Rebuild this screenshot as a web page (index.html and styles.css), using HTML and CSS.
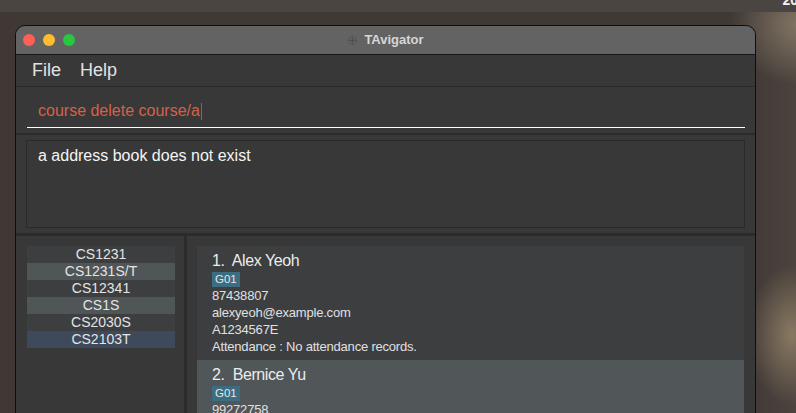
FILE: index.html
```html
<!DOCTYPE html>
<html>
<head>
<meta charset="utf-8">
<link rel="stylesheet" href="styles.css">
</head>
<body>
<div class="strip"><span class="clock">20</span></div>
<div class="window">
  <div class="titlebar">
    <div class="lights">
      <span class="light red"></span>
      <span class="light yellow"></span>
      <span class="light green"></span>
    </div>
    <div class="title">
      <svg class="appicon" width="11" height="11" viewBox="0 0 11 11">
        <circle cx="5.5" cy="5.5" r="3.8" fill="none" stroke="#555" stroke-width="1"/>
        <path d="M5.5 0.5V10.5M0.5 5.5H10.5" stroke="#555" stroke-width="1"/>
        <circle cx="5.5" cy="5.5" r="1.3" fill="#4a4a4a"/>
      </svg>
      <span>TAvigator</span>
    </div>
    <div></div>
  </div>
  <div class="menu">
    <span>File</span>
    <span>Help</span>
  </div>
  <div class="command">
    <div class="field">course delete course/a<span class="caret"></span></div>
  </div>
  <div class="result">
    <div class="resultbox">a address book does not exist</div>
  </div>
  <div class="bottom">
    <div class="leftpane">
      <div class="courses">
        <div class="course">CS1231</div>
        <div class="course alt">CS1231S/T</div>
        <div class="course">CS12341</div>
        <div class="course alt">CS1S</div>
        <div class="course">CS2030S</div>
        <div class="course selected">CS2103T</div>
      </div>
    </div>
    <div class="divider"></div>
    <div class="rightpane">
      <div class="card">
        <div class="name">1.&nbsp; Alex Yeoh</div>
        <div class="tags"><span class="tag">G01</span></div>
        <div class="line">87438807</div>
        <div class="line">alexyeoh@example.com</div>
        <div class="line">A1234567E</div>
        <div class="line">Attendance : No attendance records.</div>
      </div>
      <div class="card alt">
        <div class="name">2.&nbsp; Bernice Yu</div>
        <div class="tags"><span class="tag">G01</span></div>
        <div class="line">99272758</div>
        <div class="line">berniceyu@example.com</div>
        <div class="line">A2345678F</div>
        <div class="line">Attendance : No attendance records.</div>
      </div>
    </div>
  </div>
</div>
</body>
</html>
```
FILE: styles.css
```css
* { box-sizing: border-box; margin: 0; padding: 0; }
html, body { width: 796px; height: 413px; overflow: hidden; }
body {
  font-family: "Liberation Sans", Arial, sans-serif;
  background:
    radial-gradient(ellipse 45px 70px at 792px 335px, rgba(140,124,100,0.95), rgba(140,124,100,0)),
    radial-gradient(ellipse 70px 60px at 800px 25px, rgba(135,122,104,0.9), rgba(135,122,104,0)),
    linear-gradient(90deg, #3f3835 0%, #3f3835 93%, #4b433d 100%);
}
.strip {
  height: 12px;
  background: #4b4542;
  display: flex;
  justify-content: flex-end;
  overflow: hidden;
}
.clock {
  color: #f2f2f2;
  font-weight: bold;
  font-size: 14px;
  line-height: 14px;
  margin-top: -7px;
  margin-right: -2px;
}
.window {
  margin: 13px 0 0 15px;
  width: 741px;
  height: 420px;
  border: 1px solid #0e0e0e;
  border-radius: 10px 10px 0 0;
  overflow: hidden;
  background: #383838;
  display: flex;
  flex-direction: column;
}
.titlebar {
  height: 29px;
  flex: none;
  background: #636363;
  border-bottom: 1px solid #161616;
  display: grid;
  grid-template-columns: 1fr auto 1fr;
  align-items: center;
}
.lights { display: flex; gap: 8px; padding-left: 7px; }
.light { width: 12px; height: 12px; border-radius: 50%; }
.red { background: #fe5f57; }
.yellow { background: #febc2e; }
.green { background: #28c840; }
.title {
  display: flex;
  align-items: center;
  gap: 6px;
  color: #d6d6d6;
  font-weight: bold;
  font-size: 13px;
  line-height: 28px;
}
.menu {
  height: 32px;
  flex: none;
  border-bottom: 1px solid #2b2b2b;
  display: flex;
  gap: 19px;
  padding-left: 16px;
  font-size: 18px;
  line-height: 31px;
  color: #e2e2e2;
}
.command {
  height: 48px;
  flex: none;
  border-bottom: 2px solid #2b2b2b;
  display: flex;
  align-items: flex-end;
  padding: 0 10px 5px 11px;
}
.field {
  width: 100%;
  font-size: 16px;
  line-height: 28px;
  padding: 0 0 2px 11px;
  border-bottom: 1px solid #ffffff;
  color: #d4614c;
  display: flex;
  align-items: center;
}
.caret {
  display: inline-block;
  width: 1px;
  height: 17px;
  background: #b54f3e;
  margin-left: 1px;
}
.result {
  height: 101px;
  flex: none;
  border-bottom: 3px solid #2b2b2b;
  padding: 5px 10px;
}
.resultbox {
  height: 88px;
  border: 1px solid #2a2a2a;
  padding: 5px 11px;
  font-size: 16px;
  line-height: 20px;
  color: #f4f4f4;
}
.bottom {
  flex: 1;
  display: flex;
}
.leftpane {
  width: 168px;
  flex: none;
  padding: 10px 9px 0 11px;
}
.divider { width: 3px; flex: none; background: #2b2b2b; }
.rightpane {
  flex: 1;
  padding: 10px 11px 0 10px;
}
.course {
  height: 17px;
  line-height: 17px;
  text-align: center;
  font-size: 14px;
  color: #e4e4e4;
  background: #3c3e40;
}
.course.alt { background: #505557; }
.course.selected { background: #3e495c; }
.card {
  background: #3c3e40;
  padding: 5px 15px 5px 15px;
  color: #e0e0e0;
}
.card.alt { background: #515658; }
.name {
  font-size: 16px;
  line-height: 20px;
  letter-spacing: -0.4px;
  color: #ececec;
}
.tags { height: 16px; padding-top: 1px; display: flex; }
.tag {
  background: #3c6e83;
  color: #e6e6e6;
  font-size: 11.5px;
  line-height: 15px;
  padding: 0 3px;
}
.line {
  font-size: 13px;
  line-height: 17px;
  letter-spacing: -0.2px;
}
```
